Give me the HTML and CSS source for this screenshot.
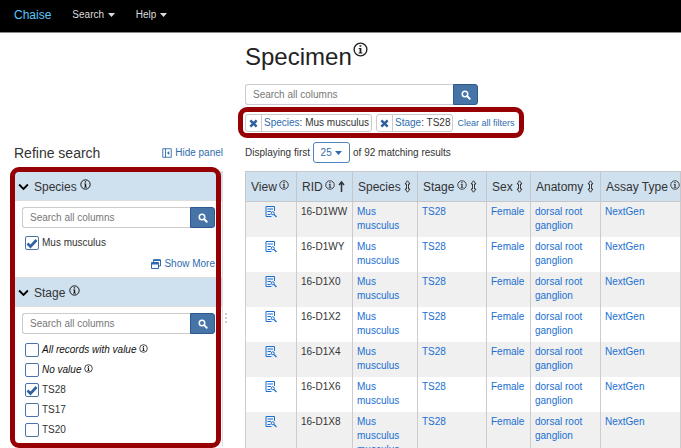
FILE: index.html
```html
<!DOCTYPE html>
<html lang="en">
<head>
<meta charset="utf-8">
<title>Specimen</title>
<link rel="stylesheet" href="styles.css">
</head>
<body>
<svg class="defs" aria-hidden="true">
  <symbol id="info" viewBox="0 0 20 20"><circle cx="10" cy="10" r="8.5" fill="none" stroke="currentColor" stroke-width="1.8"/><path fill="currentColor" d="M8.7 4.2h2.4v2.2H8.7zM7.6 8h3.6v6h1.4v1.4H7.4V14h1.4V9.4H7.6z"/></symbol>
  <symbol id="search" viewBox="0 0 20 20"><circle cx="8" cy="8" r="5.5" fill="none" stroke="currentColor" stroke-width="3"/><path stroke="currentColor" stroke-width="3.6" stroke-linecap="round" d="M12.5 12.5l5 5"/></symbol>
  <symbol id="close" viewBox="0 0 20 20"><path stroke="currentColor" stroke-width="5.4" d="M3 3l14 14M17 3L3 17"/></symbol>
  <symbol id="caret" viewBox="0 0 14 8"><path fill="currentColor" d="M0 0h14L7 8z"/></symbol>
  <symbol id="chevron" viewBox="0 0 20 14"><path fill="none" stroke="currentColor" stroke-width="3.4" d="M2 2.5l8 8 8-8"/></symbol>
  <symbol id="sort" viewBox="0 0 14 26"><path fill="none" stroke="currentColor" stroke-width="1.9" stroke-linejoin="round" d="M7 1.5l5 6.5H9v10h3L7 24.500 2 18h3V8H2z"/></symbol>
  <symbol id="up" viewBox="0 0 14 24"><path fill="none" stroke="currentColor" stroke-width="3" d="M7 23V3M2 9l5-6 5 6"/></symbol>
  <symbol id="view" viewBox="0 0 24 24"><path fill="none" stroke="currentColor" stroke-width="2" d="M19 11V2H2v20h11M5 7h11M5 12h7M5 18h6"/><circle cx="15.500" cy="15.500" r="3" fill="none" stroke="currentColor" stroke-width="2"/><path stroke="currentColor" stroke-width="2.4" d="M18 18l5 5"/></symbol>
  <symbol id="panel" viewBox="0 0 20 20"><path fill="none" stroke="currentColor" stroke-width="1.8" d="M1.500 1.500h17v17h-17zM7 1.500v17"/><path fill="currentColor" d="M14.500 6v8L10 10z"/></symbol>
  <symbol id="windows" viewBox="0 0 20 20"><path fill="none" stroke="currentColor" stroke-width="2" d="M5 6V1.500h14V14h-4M1 7h14v12H1z"/><path fill="currentColor" d="M1 7h14v4H1zM5 1h14v3H5z"/></symbol>
</svg>

<nav class="navbar">
  <a class="brand" href="#">Chaise</a>
  <button class="menu" type="button">Search <svg class="caret"><use href="#caret"/></svg></button>
  <button class="menu" type="button">Help <svg class="caret"><use href="#caret"/></svg></button>
</nav>

<div class="page">
  <aside class="side">
    <div class="side-head">
      <h2>Refine search</h2>
      <button class="link-btn" type="button"><svg class="ic10"><use href="#panel"/></svg>Hide panel</button>
    </div>
    <div class="facets">
      <section class="facet">
        <h3><svg class="chevron"><use href="#chevron"/></svg>Species <svg class="info"><use href="#info"/></svg></h3>
        <div class="facet-body">
          <div class="search"><input type="text" placeholder="Search all columns" aria-label="Search species"><button type="button" aria-label="Search"><svg class="ic10"><use href="#search"/></svg></button></div>
          <ul class="options">
            <li><label><input type="checkbox" checked>Mus musculus</label></li>
          </ul>
          <button class="link-btn more" type="button"><svg class="ic10"><use href="#windows"/></svg>Show More</button>
        </div>
      </section>
      <section class="facet">
        <h3><svg class="chevron"><use href="#chevron"/></svg>Stage <svg class="info"><use href="#info"/></svg></h3>
        <div class="facet-body">
          <div class="search"><input type="text" placeholder="Search all columns" aria-label="Search stage"><button type="button" aria-label="Search"><svg class="ic10"><use href="#search"/></svg></button></div>
          <ul class="options">
            <li><label><input type="checkbox"><em>All records with value</em><svg class="info small"><use href="#info"/></svg></label></li>
            <li><label><input type="checkbox"><em>No value</em><svg class="info small"><use href="#info"/></svg></label></li>
            <li><label><input type="checkbox" checked>TS28</label></li>
            <li><label><input type="checkbox">TS17</label></li>
            <li><label><input type="checkbox">TS20</label></li>
          </ul>
        </div>
      </section>
    </div>
  </aside>
  <div class="splitter"><i></i><i></i><i></i></div>

  <main class="main">
    <h1>Specimen<svg class="info big"><use href="#info"/></svg></h1>
    <div class="search main-search"><input type="text" placeholder="Search all columns" aria-label="Search specimens"><button type="button" aria-label="Search"><svg class="ic10"><use href="#search"/></svg></button></div>
    <div class="filters">
      <div class="chip"><button type="button" aria-label="Remove species filter"><svg><use href="#close"/></svg></button><span><a href="#">Species</a>: Mus musculus</span></div>
      <div class="chip"><button type="button" aria-label="Remove stage filter"><svg><use href="#close"/></svg></button><span><a href="#">Stage</a>: TS28</span></div>
      <button class="link-btn" type="button">Clear all filters</button>
    </div>
    <div class="count">Displaying first <button class="size" type="button">25 <svg class="caret"><use href="#caret"/></svg></button> of 92 matching results</div>
    <div class="table-wrap">
      <table>
        <colgroup><col class="c-view"><col class="c-rid"><col class="c-species"><col class="c-stage"><col class="c-sex"><col class="c-anatomy"><col class="c-assay"></colgroup>
        <thead>
          <tr>
            <th>View <svg class="info"><use href="#info"/></svg></th>
            <th>RID <svg class="info"><use href="#info"/></svg> <svg class="sort"><use href="#up"/></svg></th>
            <th>Species <svg class="sort"><use href="#sort"/></svg></th>
            <th>Stage <svg class="info"><use href="#info"/></svg> <svg class="sort"><use href="#sort"/></svg></th>
            <th>Sex <svg class="sort"><use href="#sort"/></svg></th>
            <th>Anatomy <svg class="sort"><use href="#sort"/></svg></th>
            <th>Assay Type <svg class="info"><use href="#info"/></svg></th>
          </tr>
        </thead>
        <tbody>
          <tr><td><a href="#" aria-label="View"><svg class="view"><use href="#view"/></svg></a></td><td>16-D1WW</td><td><a href="#">Mus musculus</a></td><td><a href="#">TS28</a></td><td><a href="#">Female</a></td><td><a href="#">dorsal root ganglion</a></td><td><a href="#">NextGen</a></td></tr>
          <tr><td><a href="#" aria-label="View"><svg class="view"><use href="#view"/></svg></a></td><td>16-D1WY</td><td><a href="#">Mus musculus</a></td><td><a href="#">TS28</a></td><td><a href="#">Female</a></td><td><a href="#">dorsal root ganglion</a></td><td><a href="#">NextGen</a></td></tr>
          <tr><td><a href="#" aria-label="View"><svg class="view"><use href="#view"/></svg></a></td><td>16-D1X0</td><td><a href="#">Mus musculus</a></td><td><a href="#">TS28</a></td><td><a href="#">Female</a></td><td><a href="#">dorsal root ganglion</a></td><td><a href="#">NextGen</a></td></tr>
          <tr><td><a href="#" aria-label="View"><svg class="view"><use href="#view"/></svg></a></td><td>16-D1X2</td><td><a href="#">Mus musculus</a></td><td><a href="#">TS28</a></td><td><a href="#">Female</a></td><td><a href="#">dorsal root ganglion</a></td><td><a href="#">NextGen</a></td></tr>
          <tr><td><a href="#" aria-label="View"><svg class="view"><use href="#view"/></svg></a></td><td>16-D1X4</td><td><a href="#">Mus musculus</a></td><td><a href="#">TS28</a></td><td><a href="#">Female</a></td><td><a href="#">dorsal root ganglion</a></td><td><a href="#">NextGen</a></td></tr>
          <tr><td><a href="#" aria-label="View"><svg class="view"><use href="#view"/></svg></a></td><td>16-D1X6</td><td><a href="#">Mus musculus</a></td><td><a href="#">TS28</a></td><td><a href="#">Female</a></td><td><a href="#">dorsal root ganglion</a></td><td><a href="#">NextGen</a></td></tr>
          <tr><td><a href="#" aria-label="View"><svg class="view"><use href="#view"/></svg></a></td><td>16-D1X8</td><td><a href="#">Mus musculus musculus</a></td><td><a href="#">TS28</a></td><td><a href="#">Female</a></td><td><a href="#">dorsal root ganglion</a></td><td><a href="#">NextGen</a></td></tr>
        </tbody>
      </table>
    </div>
  </main>
</div>
</body>
</html>
```
FILE: styles.css
```css
* { box-sizing: border-box; }
body {
  margin: 0;
  height: 100vh;
  overflow: hidden;
  display: flex;
  flex-direction: column;
  font: 10px/14px "Liberation Sans", Arial, sans-serif;
  color: #333;
  background: #fff;
}
.defs { position: absolute; width: 0; height: 0; }
button, input { font: inherit; color: inherit; margin: 0; }
button { padding: 0; border: 0; background: none; }
a { color: #1a6fd0; text-decoration: none; }
h1, h2, h3, ul { margin: 0; padding: 0; font-weight: 400; }

.navbar {
  flex: none;
  display: flex;
  align-items: center;
  height: 33px;
  padding: 0 14px 3px;
  background: #000;
  border-bottom: 1px solid #888;
}
.brand { color: #5bc8fa; font-size: 12px; margin-right: 21px; }
.menu { color: #ddd; margin-right: 21px; }
.caret { width: 7px; height: 4px; margin-left: 1px; vertical-align: 1px; }

.page { flex: 1; min-height: 0; display: flex; }
.side { flex: none; width: 223px; padding: 111px 0 0 14px; }
.side-head {
  display: flex;
  align-items: center;
  justify-content: space-between;
  height: 18px;
  margin-bottom: 9px;
}
.side-head h2 { font-size: 14px; }
.link-btn { display: flex; align-items: center; gap: 3px; color: #2f6cae; }
.ic10 { width: 10px; height: 10px; }
.info { width: 11px; height: 11px; vertical-align: 0; }
.info.small { width: 9px; height: 9px; margin: -4px 0 0 3px; color: #222; }
.info.big { width: 15px; height: 15px; vertical-align: 8px; margin-left: 1px; }

.facets { position: relative; border-right: 1px solid #ddd; }
.facets::after {
  content: "";
  position: absolute;
  inset: -4px 1px -2px -4px;
  border: 5px solid #960004;
  border-radius: 9px;
  pointer-events: none;
}
.facet h3 {
  height: 30px;
  padding-left: 4px;
  line-height: 30px;
  font-size: 12px;
  background: #cfe0ef;
  border-top: 1px solid #ddd;
  border-bottom: 1px solid #ddd;
}
.facet h3 .chevron { width: 11px; height: 8px; margin-right: 5px; color: #000; }
.facet h3 .info { vertical-align: 1px; color: #111; }
.facet-body { padding: 6px 7px 6px 8px; }
.facet + .facet .options { margin-top: 6px; }

.search { display: flex; height: 21px; }
.search input {
  flex: 1;
  min-width: 0;
  padding: 0 7px;
  border: 1px solid #ccc;
  border-right: 0;
  border-radius: 3px 0 0 3px;
  outline: 0;
  background: #fff;
}
.search input::placeholder { color: #777; opacity: 1; }
.search button {
  flex: none;
  display: grid;
  place-items: center;
  width: 25px;
  color: #fff;
  background: #4674a7;
  border: 1px solid #2c5a8f;
  border-radius: 0 3px 3px 0;
}

.options { list-style: none; margin-top: 5px; padding-left: 3px; }
.options li, .options label { display: flex; align-items: center; height: 20px; }
.options em { color: #111; }
.options input {
  appearance: none;
  width: 14px;
  height: 14px;
  margin-right: 3px;
  border: 1px solid #4674a7;
  border-radius: 2px;
  background: #fff;
}
.options input:checked {
  background: #fff url("data:image/svg+xml,%3Csvg xmlns='http://www.w3.org/2000/svg' viewBox='0 0 12 12'%3E%3Cpath d='M1.500 6.500l3 3 6-6.500' fill='none' stroke='%232f62a0' stroke-width='2.600'/%3E%3C/svg%3E") center / 12px 12px;
}
.more { margin: 4px 0 0 auto; }

.splitter { flex: none; align-self: center; width: 6px; display: grid; gap: 2px; padding: 155px 0 0 2px; }
.splitter i { width: 2px; height: 2px; background: #bbb; border-radius: 1px; }

.main { flex: 1; min-width: 0; padding: 8px 0 0 16px; }
h1 { color: #222; font-size: 24px; line-height: 32px; }
.main-search { width: 233px; margin-top: 11px; }
.filters {
  position: relative;
  display: flex;
  align-items: center;
  gap: 4px;
  height: 18px;
  margin-top: 9px;
  width: max-content;
}
.filters::after {
  content: "";
  position: absolute;
  inset: -7px -10px -6px -7px;
  border: 5px solid #960004;
  border-radius: 9px;
  pointer-events: none;
}
.chip { display: flex; height: 18px; line-height: 16px; border: 1px solid #ccc; border-radius: 3px; }
.chip button { width: 16px; border-right: 1px solid #ccc; color: #2c5f9c; display: grid; place-items: center; }
.chip button svg { width: 9px; height: 9px; }
.chip span { padding: 0 2px; }
.chip a { color: #2f6cae; }
.filters .link-btn { font-size: 9px; }
.count { display: flex; align-items: center; gap: 3px; height: 21px; margin-top: 10px; }
.size { width: 37px; height: 21px; color: #2f6cae; border: 1px solid #4f84ba; border-radius: 3px; }

.table-wrap { margin-top: 8px; overflow: hidden; }
table { width: 100%; border-collapse: collapse; table-layout: fixed; }
.c-view { width: 51px; }
.c-rid { width: 56px; }
.c-species { width: 65px; }
.c-stage { width: 69px; }
.c-sex { width: 44px; }
.c-anatomy { width: 70px; }
th {
  height: 30px;
  padding: 0 0 0 5px;
  text-align: left;
  white-space: nowrap;
  font-size: 12px;
  font-weight: 400;
  background: #cfe0ef;
  border: 1px solid #c4c8cc;
}
th .info { width: 10px; height: 10px; margin-left: -1px; vertical-align: 1px; }
th .sort { width: 7px; height: 13px; vertical-align: -2px; }
td { height: 35px; padding: 3px 4px; vertical-align: top; border: solid #ccc; border-width: 0 1px; }
td:first-child { text-align: center; }
tbody tr:nth-child(odd) { background: #f0f0f0; }
.view { width: 12px; height: 13px; }
```
